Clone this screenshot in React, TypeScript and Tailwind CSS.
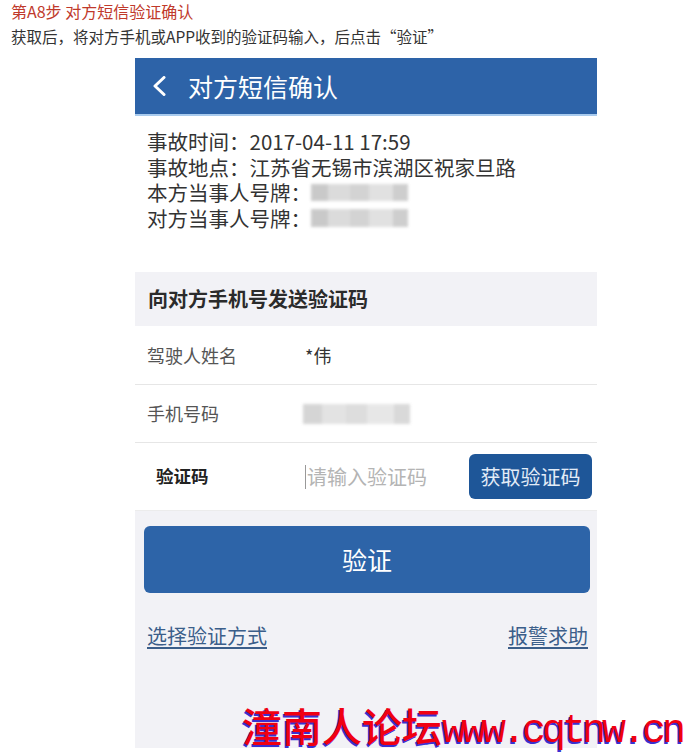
import React from 'react';

const cjk = { fontFamily: '"Noto Sans CJK SC", "Noto Sans", sans-serif' };

// 打码区域（模糊的车牌 / 手机号）
function Blur({ w, h, tone }: { w: number; h: number; tone: 'dark' | 'light' }) {
  return (
    <span
      className={`inline-flex align-middle blur-[1.5px] ${tone === 'dark' ? 'opacity-90' : 'opacity-70'}`}
      style={{ width: w, height: h }}
    >
      <span className="h-full w-[18%] bg-[#c4c4c4]" />
      <span className="h-full w-[22%] bg-[#d8d8d8]" />
      <span className="h-full w-[20%] bg-[#cfcfcf]" />
      <span className="h-full w-[25%] bg-[#dedede]" />
      <span className="h-full w-[15%] bg-[#c9c9c9]" />
    </span>
  );
}

export default function App() {
  return (
    <div className="relative w-[685px] h-[754px] bg-white overflow-hidden" style={cjk}>
      {/* 文章说明 */}
      <div className="px-[11px] pt-[1px]">
        <p className="text-[16px] leading-[20px] text-[#c0392b]">第A8步 对方短信验证确认</p>
        <p className="text-[15.5px] leading-[30px] text-[#333]">获取后，将对方手机或APP收到的验证码输入，后点击“验证”</p>
      </div>

      {/* 手机截图 */}
      <div className="ml-[135px] mt-[7px] w-[462px] h-[690px] flex flex-col bg-[#f2f2f6]">
        {/* 顶栏 */}
        <header className="h-[58px] flex items-center bg-[#2d63a8] border-b-2 border-[#a9cbee]">
          <svg width="14" height="20" viewBox="0 0 14 20" className="ml-[17px]">
            <polyline points="12,1.5 3,10 12,18.5" fill="none" stroke="white" strokeWidth="3" strokeLinecap="round" strokeLinejoin="round" />
          </svg>
          <h1 className="ml-[22px] text-[25px] text-white leading-none">对方短信确认</h1>
        </header>

        {/* 事故信息 */}
        <section className="bg-white pt-[13px] pb-[41px] pl-[12px] text-[20.5px] leading-[25.5px] text-[#333]">
          <p>事故时间：2017-04-11 17:59</p>
          <p>事故地点：江苏省无锡市滨湖区祝家旦路</p>
          <p className="flex items-center">本方当事人号牌：<Blur w={97} h={17} tone="dark" /></p>
          <p className="flex items-center">对方当事人号牌：<Blur w={97} h={18} tone="dark" /></p>
        </section>

        <div className="h-[54px] flex items-center pl-[13px] text-[20px] font-bold text-[#2b2b2b]">
          向对方手机号发送验证码
        </div>

        {/* 表单 */}
        <div className="bg-white">
          <div className="h-[59px] flex items-center pl-[12px] border-b border-[#e6e6e6]">
            <span className="w-[158px] text-[18px] text-[#555]">驾驶人姓名</span>
            <span className="text-[18px] text-[#333]">*伟</span>
          </div>
          <div className="h-[58px] flex items-center pl-[12px] border-b border-[#e6e6e6]">
            <span className="w-[156px] text-[18px] text-[#555]">手机号码</span>
            <Blur w={107} h={20} tone="light" />
          </div>
          <div className="h-[68px] flex items-center pl-[21px] pr-[5px] border-b border-[#ececec]">
            <span className="w-[149px] text-[17.5px] font-semibold text-[#222]">验证码</span>
            <span className="w-px h-[24px] bg-[#999]" />
            <span className="ml-[1px] flex-1 text-[20px] text-[#b4b4b4]">请输入验证码</span>
            <button className="w-[123px] h-[45px] rounded-[6px] bg-[#1e5698] text-[20px] text-[#e3ecf7]">
              获取验证码
            </button>
          </div>
        </div>

        <button className="mt-[15px] ml-[9px] mr-[7px] h-[67px] rounded-[6px] bg-[#2d64a8] text-[25px] text-white">
          验证
        </button>

        <div className="mt-[31px] flex justify-between pl-[12px] pr-[9px] text-[20px] leading-[24px] text-[#3b5e8a]">
          <a className="underline underline-offset-[3px]">选择验证方式</a>
          <a className="underline underline-offset-[3px]">报警求助</a>
        </div>
      </div>

      {/* 水印 */}
      <div className="absolute left-[242px] top-[700px] flex items-baseline whitespace-nowrap font-medium text-[#f00012] [text-shadow:-1.5px_1.5px_0_#3a2fd0]">
        <span className="text-[40px] leading-[50px]">潼南人论坛</span>
        <span className="text-[40px] leading-[50px] tracking-[-4px]" style={{ fontFamily: '"Liberation Mono", monospace' }}>
          www.cqtnw.cn
        </span>
      </div>
    </div>
  );
}
